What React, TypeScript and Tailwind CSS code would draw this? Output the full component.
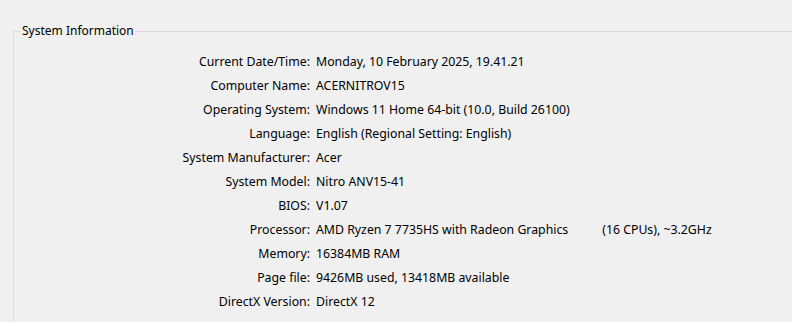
import React from "react";

const rows: [string, React.ReactNode][] = [
  ["Current Date/Time:", "Monday, 10 February 2025, 19.41.21"],
  ["Computer Name:", "ACERNITROV15"],
  ["Operating System:", "Windows 11 Home 64-bit (10.0, Build 26100)"],
  ["Language:", "English (Regional Setting: English)"],
  ["System Manufacturer:", "Acer"],
  ["System Model:", "Nitro ANV15-41"],
  ["BIOS:", "V1.07"],
  [
    "Processor:",
    <>
      <span>AMD Ryzen 7 7735HS with Radeon Graphics</span>
      <span className="ml-[34px]">(16 CPUs), ~3.2GHz</span>
    </>,
  ],
  ["Memory:", "16384MB RAM"],
  ["Page file:", "9426MB used, 13418MB available"],
  ["DirectX Version:", "DirectX 12"],
];

export default function App() {
  return (
    <div
      className="w-[792px] h-[322px] overflow-hidden bg-[#f0f0f0] text-black text-[12.3px]"
      style={{ fontFamily: '"Noto Sans", "DejaVu Sans", sans-serif' }}
    >
      <div className="pt-[31px] pl-[13px]">
        <fieldset className="relative w-[800px] h-[320px] border-t border-l border-[#dcdcdc]">
          <div className="absolute left-[7px] top-[-9px] px-[1px] bg-[#f0f0f0] leading-[16px] text-[12px]">
            System Information
          </div>
          <div className="grid grid-cols-[296px_1fr] gap-x-[6px] pt-[18px]">
            {rows.map(([label, value], i) => (
              <React.Fragment key={i}>
                <div className="text-right leading-[24px] whitespace-nowrap">{label}</div>
                <div className="leading-[24px] whitespace-nowrap">{value}</div>
              </React.Fragment>
            ))}
          </div>
        </fieldset>
      </div>
    </div>
  );
}
